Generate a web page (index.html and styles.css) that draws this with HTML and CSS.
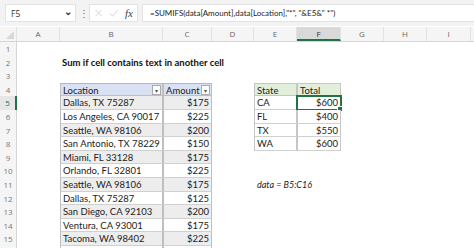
FILE: index.html
```html
<!DOCTYPE html>
<html>
<head>
  <title>Sum if cell contains text in another cell</title>
  <link rel="stylesheet" href="styles.css">
</head>
<body>
<div class="bar">
  <div class="namebox"><span>F5</span><span class="chev">&#8964;</span></div>
  <div class="dots">&#8942;</div>
  <div class="btns">
    <svg width="12" height="12" viewBox="0 0 12 12"><path d="M2 2 L10 10 M10 2 L2 10" stroke="#c8c8c8" stroke-width="1" fill="none"/></svg>
    <svg width="13" height="12" viewBox="0 0 13 12"><path d="M1 7 L5 10 L12 2" stroke="#c8c8c8" stroke-width="1" fill="none"/></svg>
    <span class="fx">fx</span>
  </div>
  <div class="formula">=SUMIFS(data[Amount],data[Location],"*", "&amp;E5&amp;" *")</div>
</div>

<div class="sheet">
  <div class="row head">
    <span class="corner"></span>
    <span>A</span><span>B</span><span>C</span><span>D</span><span>E</span><span class="sel">F</span><span>G</span><span>H</span><span>I</span><span></span>
  </div>
  <div class="row"><span class="num">1</span></div>
  <div class="row"><span class="num">2</span><span></span><span class="title">Sum if cell contains text in another cell</span></div>
  <div class="row"><span class="num">3</span></div>
  <div class="row"><span class="num">4</span><span></span>
    <span class="th">Location <i class="drop">&#9662;</i></span><span class="th">Amount <i class="drop">&#9662;</i></span>
    <span></span><span class="sh">State</span><span class="sh">Total</span></div>
  <div class="row band"><span class="num cur">5</span><span></span><span class="td">Dallas, TX 75287</span><span class="td amt">$175</span>
    <span></span><span class="sd">CA</span><span class="sd amt active">$600<i class="handle"></i></span></div>
  <div class="row"><span class="num">6</span><span></span><span class="td">Los Angeles, CA 90017</span><span class="td amt">$225</span>
    <span></span><span class="sd">FL</span><span class="sd amt">$400</span></div>
  <div class="row band"><span class="num">7</span><span></span><span class="td">Seattle, WA 98106</span><span class="td amt">$200</span>
    <span></span><span class="sd">TX</span><span class="sd amt">$550</span></div>
  <div class="row"><span class="num">8</span><span></span><span class="td">San Antonio, TX 78229</span><span class="td amt">$150</span>
    <span></span><span class="sd">WA</span><span class="sd amt">$600</span></div>
  <div class="row band"><span class="num">9</span><span></span><span class="td">Miami, FL 33128</span><span class="td amt">$175</span></div>
  <div class="row"><span class="num">10</span><span></span><span class="td">Orlando, FL 32801</span><span class="td amt">$225</span></div>
  <div class="row band"><span class="num">11</span><span></span><span class="td">Seattle, WA 98106</span><span class="td amt">$175</span>
    <span></span><span class="note">data = B5:C16</span></div>
  <div class="row"><span class="num">12</span><span></span><span class="td">Dallas, TX 75287</span><span class="td amt">$125</span></div>
  <div class="row band"><span class="num">13</span><span></span><span class="td">San Diego, CA 92103</span><span class="td amt">$200</span></div>
  <div class="row"><span class="num">14</span><span></span><span class="td">Ventura, CA 93001</span><span class="td amt">$175</span></div>
  <div class="row band"><span class="num">15</span><span></span><span class="td">Tacoma, WA 98402</span><span class="td amt">$225</span></div>
  <div class="row"><span class="num">16</span><span></span><span class="td">Tacoma, WA 98402</span><span class="td amt">$150</span></div>
</div>
</body>
</html>
```

FILE: styles.css
```css
body {margin: 0; background: #fff; font-family: "Lato", "Liberation Sans", sans-serif; overflow: hidden;}

/* formula bar */
.bar {display: flex; align-items: center; height: 26px; background: #f3f3f3; padding: 0 0 0 5px; box-sizing: border-box;}
.namebox {display: flex; justify-content: space-between; align-items: center; width: 71px; height: 18px; background: #fff; border: 1px solid #e3e3e3; box-sizing: border-box; padding: 0 3px 0 5px; font-family: "Open Sans", sans-serif; font-size: 8.5px; color: #333;}
.chev {font-size: 10px; color: #333; margin-top: -5px; font-weight: bold;}
.dots {width: 4px; margin: 0 6px 0 3px; font-size: 10px; color: #666; text-align: center;}
.btns {display: flex; align-items: center; gap: 6px; width: 49px; height: 18px; background: #fff; border: 1px solid #e3e3e3; box-sizing: border-box; padding: 0 4px; margin-right: 4px;}
.fx {font-family: "Liberation Serif", serif; font-style: italic; font-size: 11px; color: #444;}
.formula {flex: 1; height: 18px; background: #fff; border: 1px solid #e3e3e3; border-right: none; box-sizing: border-box; padding-left: 7px; font-family: "Lato", sans-serif; font-size: 8px; line-height: 16px; color: #222; white-space: nowrap;}

/* grid */
.sheet {margin-top: 1px;}
.row {display: grid; grid-template-columns: 17px 43px 103px 49px 42px 43px 44px 43px 43px 44px 10px; grid-template-rows: 13.6px; height: 13.6px; font-size: 9.5px; line-height: 13px; color: #222;}
.row span {box-sizing: border-box; white-space: nowrap; position: relative;}
.num {background: #f5f5f5; border-right: 1px solid #d6d6d6; color: #777; text-align: center; font-family: "Open Sans", sans-serif; font-size: 8px;}
.num.cur {border-right: 2px solid #217346; background: #e6e6e6; color: #217346;}

.head {height: 14px; grid-template-rows: 14px; background: #f5f5f5; border-bottom: 1px solid #d6d6d6; font-family: "Open Sans", sans-serif; font-size: 8px; color: #666;}
.head span {text-align: center; border-right: 1px solid #e2e2e2;}
.head .sel {background: #d9d9d9; border-bottom: 2px solid #217346; color: #333;}
.corner {background: #f5f5f5;}
.corner::after {content: ""; position: absolute; right: 2px; bottom: 2px; border-left: 8px solid transparent; border-bottom: 8px solid #d8d8d8;}

.title {font-weight: bold; padding-left: 2px; color: #111;}

/* data table */
.th {background: #d9e1f2; border: 1px solid #bfbfbf; border-top: 1px solid #a9b8d8; padding-left: 2px;}
.drop {position: absolute; right: 1px; top: 1px; width: 9px; height: 10px; background: #fff; border: 1px solid #aaa; box-sizing: border-box; font-style: normal; font-size: 6px; line-height: 9px; text-align: center; color: #555;}
.td {border-left: 1px solid #bfbfbf; border-right: 1px solid #bfbfbf; border-bottom: 1px solid #d0d0d0; padding-left: 2px;}
.band .td {background: #ededed;}
.amt {text-align: right; padding-right: 2px;}

/* summary table */
.sh {background: #e2efda; border: 1px solid #c6c6c6; padding-left: 2px;}
.sd {border-left: 1px solid #c6c6c6; border-right: 1px solid #c6c6c6; border-bottom: 1px solid #d0d0d0; padding-left: 2px; background: #fff;}
.active {outline: 2px solid #217346; outline-offset: -1px;}
.handle {position: absolute; right: -3px; bottom: -3px; width: 4px; height: 4px; background: #217346; border: 1px solid #fff;}

.note {grid-column: 6 / 9; font-style: italic; padding-left: 3px; font-size: 9px;}
```
